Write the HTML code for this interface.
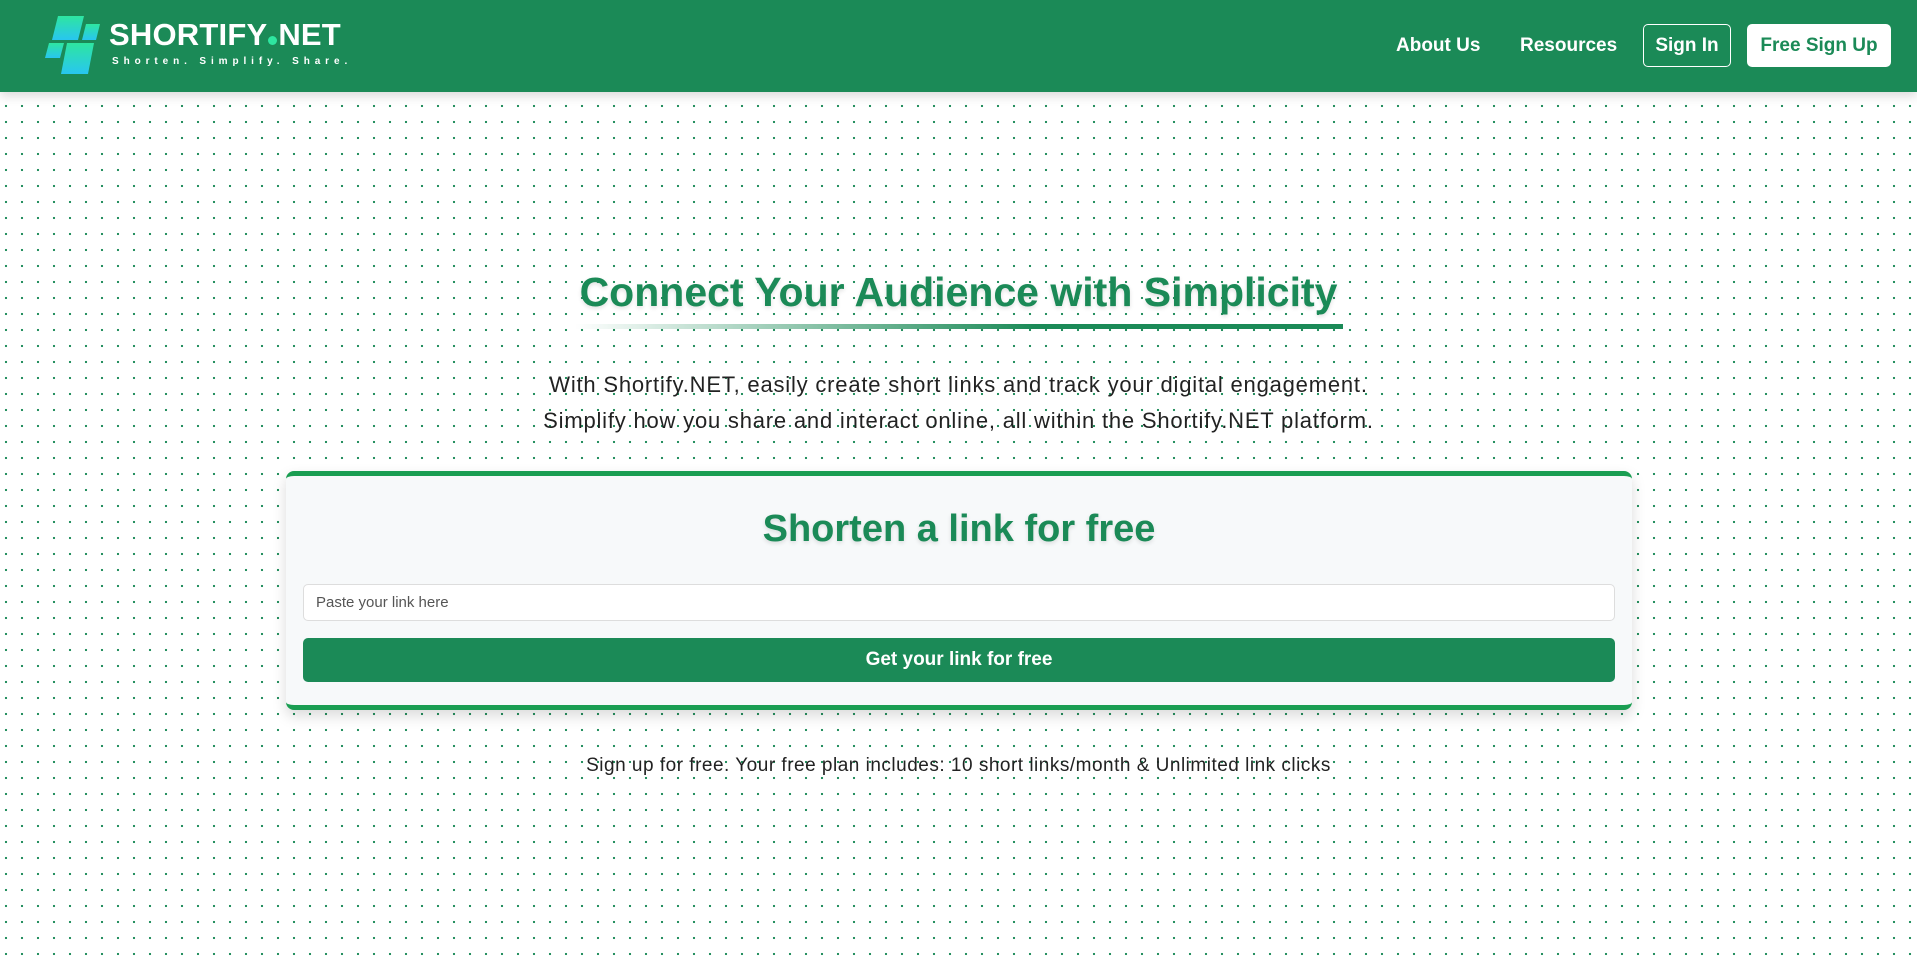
<!DOCTYPE html>
<html><head><meta charset="utf-8"><style>
*{margin:0;padding:0;box-sizing:border-box}
body{width:1917px;height:957px;overflow:hidden;font-family:"Liberation Sans",sans-serif;background-color:#fff;background-image:radial-gradient(#1b8a57 1px,transparent 1.3px);background-size:16px 16px;background-position:-2px 2px;position:relative}
.hdr{position:absolute;left:0;top:0;width:1917px;height:92px;background:#1b8a57;box-shadow:0 4px 10px rgba(0,0,0,.15)}
.logo{position:absolute;left:44px;top:16px}
.lt{position:absolute;left:109px;top:17px;color:#fff;font-weight:bold;font-size:31px;letter-spacing:0.2px}
.lt i{display:inline-block;width:9px;height:9px;border-radius:50%;background:#2ee6a0;margin:0 1px}
.tag{position:absolute;left:112px;top:56px;color:#fff;font-size:10px;font-weight:bold;letter-spacing:4.9px}
.nav{position:absolute;top:0;height:92px;line-height:92px;color:#fff;font-weight:bold;font-size:19px}
.btn{position:absolute;top:24px;height:43px;line-height:41px;border-radius:5px;font-weight:bold;font-size:19px;text-align:center}
h1{position:absolute;left:0;width:1917px;top:269px;text-align:center;color:#1b8a57;font-size:41px;font-weight:bold;text-shadow:0 2px 4px rgba(0,0,0,.12)}
.ul{position:absolute;left:575px;top:324px;width:768px;height:5px;background:linear-gradient(90deg,rgba(27,138,87,0),#1b8a57 60%)}
.p{position:absolute;left:0;width:1917px;text-align:center;color:#222;font-size:22px;letter-spacing:0.8px}
.card{position:absolute;left:286px;top:471px;width:1346px;height:239px;background:#f7f9fa;border-top:5px solid #1a9e52;border-bottom:5px solid #1a9e52;border-radius:8px;box-shadow:0 6px 14px rgba(0,0,0,.15)}
.card h2{position:absolute;left:0;width:100%;top:32px;text-align:center;color:#1b8a57;font-size:38px;text-shadow:0 2px 4px rgba(0,0,0,.12)}
.in{position:absolute;left:17px;top:108px;width:1312px;height:37px;background:#fff;border:1px solid #ddd;border-radius:5px;font-size:15px;color:#555;padding-left:12px;line-height:35px}
.go{position:absolute;left:17px;top:162px;width:1312px;height:44px;background:#1b8a57;border-radius:5px;color:#fff;font-weight:bold;font-size:19px;text-align:center;line-height:44px}
</style></head><body>
<div class="hdr">
<svg class="logo" width="60" height="62" viewBox="0 0 60 62">
<defs><linearGradient id="g" x1="0" y1="0" x2="0" y2="1"><stop offset="0" stop-color="#2ee6a0"/><stop offset="1" stop-color="#28c6f0"/></linearGradient></defs>
<polygon points="14,0 40,0 34,24 8,24" fill="url(#g)"/>
<polygon points="42,8 56,8 52,24 38,24" fill="url(#g)"/>
<polygon points="5,27 20,27 16,42 1,42" fill="url(#g)"/>
<polygon points="23,27 50,27 44,58 17,58" fill="url(#g)"/>
</svg>
<div class="lt">SHORTIFY<i></i>NET</div>
<div class="tag">Shorten. Simplify. Share.</div>
<div class="nav" style="left:1396px">About Us</div>
<div class="nav" style="left:1520px">Resources</div>
<div class="btn" style="left:1643px;width:88px;border:1px solid #fff;color:#fff">Sign In</div>
<div class="btn" style="left:1747px;width:144px;background:#fff;color:#1b8a57;line-height:43px">Free Sign Up</div>
</div>
<h1>Connect Your Audience with Simplicity</h1>
<div class="ul"></div>
<div class="p" style="top:372px">With Shortify.NET, easily create short links and track your digital engagement.</div>
<div class="p" style="top:408px">Simplify how you share and interact online, all within the Shortify.NET platform.</div>
<div class="card"><h2>Shorten a link for free</h2><div class="in">Paste your link here</div><div class="go">Get your link for free</div></div>
<div class="p" style="top:755px;font-size:19px;letter-spacing:0.5px">Sign up for free. Your free plan includes: 10 short links/month &amp; Unlimited link clicks</div>
</body></html>
